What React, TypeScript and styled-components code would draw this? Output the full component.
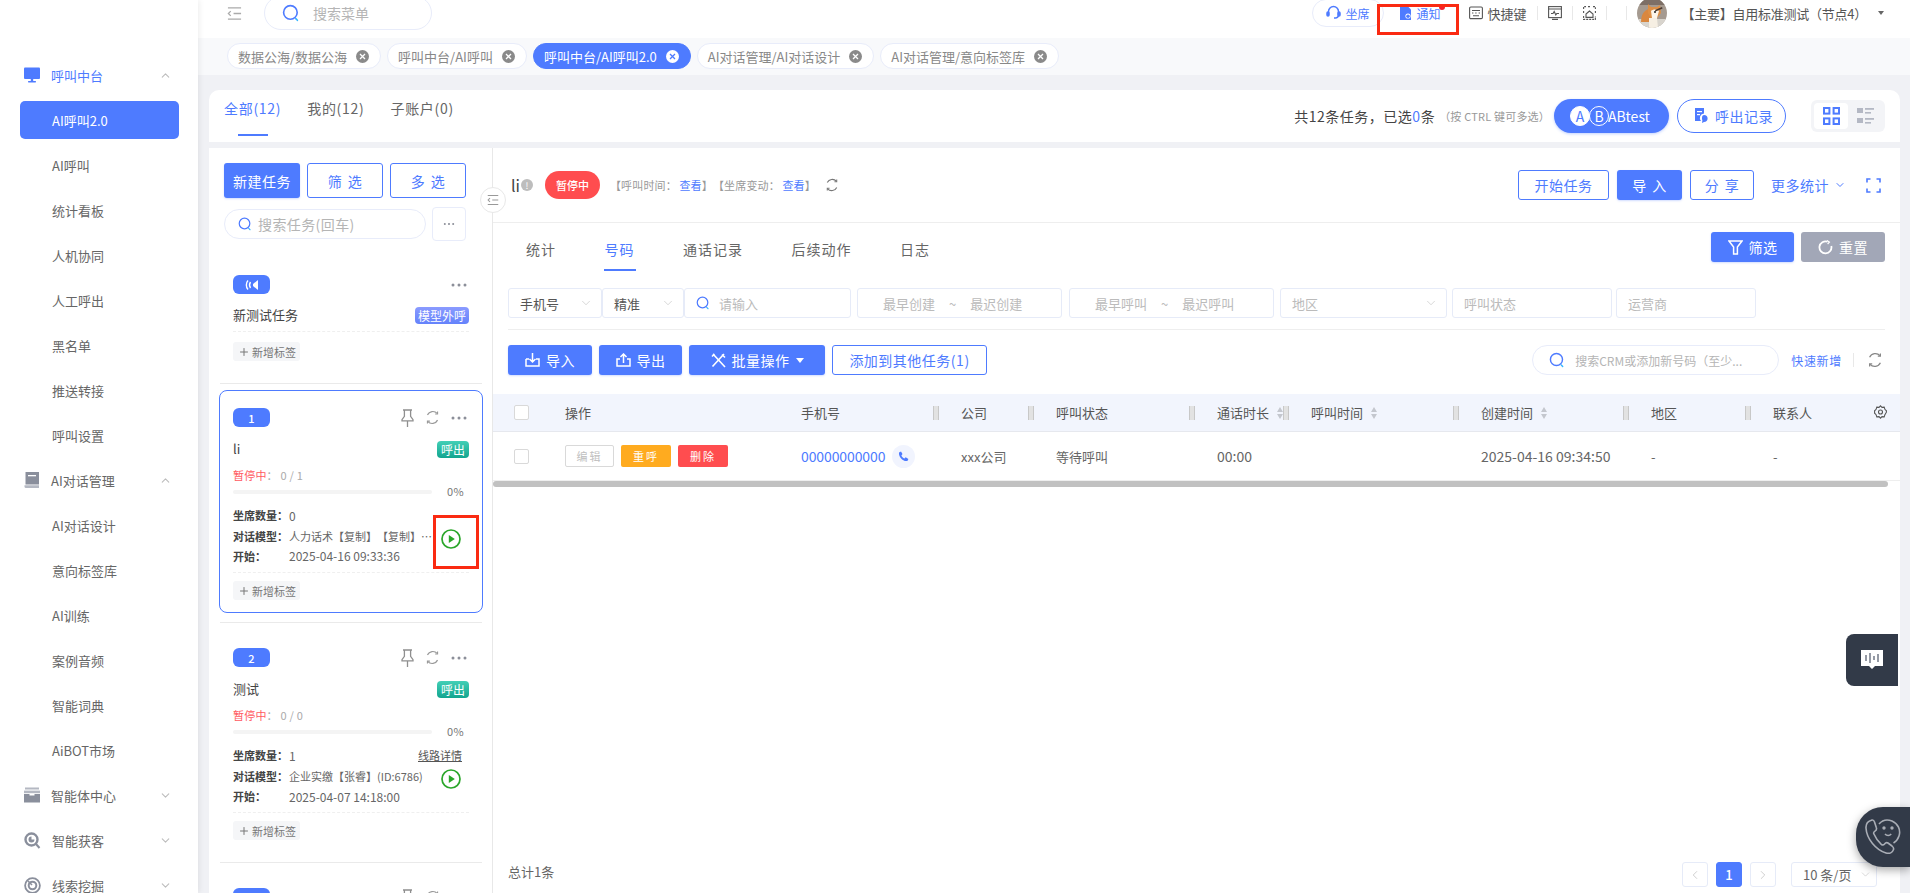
import React from 'react';
import styled, { createGlobalStyle, css } from 'styled-components';
import { ChevronDown, ChevronUp, ChevronLeft, ChevronRight, Plus } from 'lucide-react';

const PRIMARY = '#4e7bff';
const FONT = '"Noto Sans CJK SC", "Noto Sans", sans-serif';

const GlobalStyle = createGlobalStyle`
  html, body { margin: 0; padding: 0; height: 100%; overflow: hidden; background: #fff; }
  body { font-family: ${FONT}; color: #333; text-spacing-trim: space-all; }
  #root { height: 100%; }
  * { box-sizing: border-box; }
`;

/* ---------- icons ---------- */
const CollapseIcon: React.FC<{ size?: number; color?: string }> = ({ size = 15, color = '#aaa' }) => (
  <svg width={size} height={size} viewBox="0 0 16 16" fill="none" stroke={color} strokeWidth="1.4">
    <path d="M1 2h14M7 8h8M1 14h14" />
    <path d="M4 5.5 1.5 8 4 10.5" />
  </svg>
);

const SearchIcon: React.FC<{ size?: number }> = ({ size = 18 }) => (
  <svg width={size} height={size} viewBox="0 0 18 18" fill="none" strokeWidth="1.6">
    <circle cx="8.4" cy="8.4" r="6.8" stroke={PRIMARY} />
    <path d="M13.8 14.6l1.6 1.7" stroke="#35b6ff" strokeLinecap="round" />
  </svg>
);

const Monitor = () => (
  <svg width="16" height="16" viewBox="0 0 16 16" fill={PRIMARY}>
    <rect x="0" y="0.5" width="16" height="11.5" rx="1" />
    <rect x="6.8" y="12" width="2.4" height="2" />
    <rect x="4" y="14" width="8" height="1.4" rx=".6" />
  </svg>
);
const BookIcon = () => (
  <svg width="16" height="16" viewBox="0 0 16 16" fill="#8a8f9c">
    <path d="M1.5 0H15v12.5H1.5z" />
    <path d="M.5 13.2H15V16H2a1.5 1.5 0 0 1-1.5-1.5z" fill="#b4b8c2" />
    <rect x="4" y="3" width="8" height="1.3" fill="#fff" />
  </svg>
);
const BoxIcon = () => (
  <svg width="16" height="16" viewBox="0 0 16 16" fill="#8a8f9c">
    <rect x="1" y=".5" width="14" height="2" fill="#b4b8c2" />
    <rect x="0" y="3.6" width="16" height="2.6" fill="#b4b8c2" />
    <path d="M0 7h5.5v1.600h5V7H16v8.500H0z" />
  </svg>
);
const MagnetIcon = () => (
  <svg width="17" height="17" viewBox="0 0 17 17" fill="none">
    <circle cx="7.5" cy="7.5" r="6" stroke="#8a8f9c" strokeWidth="2.4" />
    <path d="M7.5 4.5a3 3 0 1 0 3 3h-3z" fill="#8a8f9c" />
    <path d="M12 12l3.5 4" stroke="#8a8f9c" strokeWidth="2" />
  </svg>
);
const TargetIcon = () => (
  <svg width="17" height="17" viewBox="0 0 17 17" fill="none" stroke="#8a8f9c">
    <circle cx="8.5" cy="8.5" r="7.4" strokeWidth="1.8" />
    <circle cx="8.5" cy="8.5" r="3.8" strokeWidth="2" />
    <path d="M8 8l-4-4" strokeWidth="1.6" />
  </svg>
);

const Headset = () => (
  <svg width="15" height="16" viewBox="0 0 15 16" fill="none" stroke={PRIMARY} strokeWidth="1.5">
    <path d="M2.5 8V6.500a5 5 0 0 1 10 0V10a3 3 0 0 1-3 3H8" />
    <rect x="1" y="7" width="2" height="4" rx="1" fill={PRIMARY} />
    <rect x="12" y="7" width="2" height="4" rx="1" fill={PRIMARY} />
  </svg>
);
const NoticeIcon = () => (
  <svg width="12" height="14" viewBox="0 0 12 14" fill={PRIMARY}>
    <path d="M0 0h7.5L11 3.5V14H0z" />
    <circle cx="8" cy="10" r="2.6" fill="#fff" />
    <circle cx="8" cy="10.2" r="1.8" />
  </svg>
);
const KeyIcon = () => (
  <svg width="14" height="14" viewBox="0 0 14 14" fill="none" stroke="#555" strokeWidth="1.1">
    <rect x=".6" y="1" width="12.8" height="11.6" rx="1.2" />
    <path d="M3 4.500h8M3 7h1.400M6.200 7h1.400M9.600 7H11M4 9.800h6" />
  </svg>
);
const PulseIcon = () => (
  <svg width="14" height="14" viewBox="0 0 14 14" fill="none" stroke="#555" strokeWidth="1.1">
    <rect x=".6" y=".6" width="12.8" height="11" />
    <path d="M.6 3h12.800M3 7.500h2l1.200-2 1.600 3.400 1-1.400H11M4 13.400h6" />
  </svg>
);
const ShotIcon = () => (
  <svg width="13" height="14" viewBox="0 0 13 14" fill="none" stroke="#555" strokeWidth="1.1">
    <path d="M.6 3V.6h2.400M5 .6h3M10 .6h2.400V3M.6 5v3M12.400 5v3M.6 10v3.400h11.800V10" strokeDasharray="2 1" />
    <path d="M6.500 5 3 8v3.400h7V8z" />
  </svg>
);
const Avatar = () => (
  <svg width="30" height="30" viewBox="0 0 30 30">
    <defs>
      <clipPath id="av"><circle cx="15" cy="15" r="15" /></clipPath>
    </defs>
    <g clipPath="url(#av)">
      <rect width="30" height="30" fill="#a59a90" />
      <rect y="0" width="30" height="7" fill="#7d6f66" />
      <rect y="21" width="30" height="9" fill="#d8d4cd" />
      <path d="M4 24c0-7 3-12 8-13l3 13z" fill="#d9873f" />
      <path d="M11 6l3 3h6l3-2 1 8-4 5h-6l-3-5z" fill="#dd8f45" />
      <path d="M14 13c2-2 6-2 8 0l-2 7h-5z" fill="#fbf5ea" />
      <path d="M12 20h8l1 10h-9z" fill="#f6efe3" />
      <path d="M18 12l7-3 .6 1.400-7 3z" fill="#4a3a30" />
      <circle cx="18" cy="14" r="1" fill="#222" />
    </g>
  </svg>
);
const RecordIcon = () => (
  <svg width="14" height="15" viewBox="0 0 14 15" fill={PRIMARY}>
    <path d="M1 0h9v5.400a4.600 4.600 0 0 0-3 7.600H1z" />
    <rect x="3" y="3" width="5" height="1.2" fill="#fff" />
    <rect x="3" y="6" width="3" height="1.2" fill="#fff" />
    <path d="M10 7c2.400 0 3.600 1.400 3.600 3.400S12.200 14 10 14l-2 1 .4-2.400C7.600 10 8 7 10 7z" />
  </svg>
);
const GridIcon = () => (
  <svg width="17" height="18" viewBox="0 0 17 18" fill="none" stroke={PRIMARY} strokeWidth="2">
    <rect x="1" y="1" width="5.4" height="5.6" />
    <rect x="10.6" y="1" width="5.4" height="5.6" />
    <rect x="1" y="11.4" width="5.4" height="5.6" />
    <rect x="10.6" y="11.4" width="5.4" height="5.6" />
  </svg>
);
const ListIcon = () => (
  <svg width="17" height="18" viewBox="0 0 17 18" fill="#b4b8c4">
    <rect x="0" y="1" width="6" height="5" />
    <rect x="8" y="1" width="9" height="1.8" />
    <rect x="8" y="5" width="6" height="1.6" />
    <rect x="0" y="11" width="6" height="5" />
    <rect x="8" y="11" width="9" height="1.8" />
    <rect x="8" y="15" width="6" height="1.6" />
  </svg>
);
const PinIcon = () => (
  <svg width="13" height="18" viewBox="0 0 13 18" fill="none" stroke="#8f8f8f" strokeWidth="1.3">
    <path d="M2 1h9M3.400 1v6.400L1 10.600v1.200h11v-1.200L9.600 7.400V1M6.500 11.800V18" />
  </svg>
);
const RefreshIcon: React.FC<{ size?: number; color?: string }> = ({ size = 15, color = '#999' }) => (
  <svg width={size} height={size} viewBox="0 0 16 16" fill="none" stroke={color} strokeWidth="1.3">
    <path d="M2.600 5.200A6.400 6.400 0 0 1 13 3.600" />
    <path d="M13.400 10.800A6.400 6.400 0 0 1 3 12.400" />
    <path d="M13.400 1.600v2.600h-2.600M2.600 14.400v-2.600h2.600" strokeWidth="1.2" />
  </svg>
);
const ResetIcon = () => (
  <svg width="15" height="15" viewBox="0 0 15 15" fill="none" stroke="#fff" strokeWidth="1.8">
    <path d="M9.500 1.700A6 6 0 1 0 13.300 6" />
    <path d="M9 .6l2.400 1.500L9.600 4" strokeWidth="1.2" />
  </svg>
);
const DotsIcon: React.FC = () => (
  <svg width="16" height="4" viewBox="0 0 16 4" fill="#8c8f99">
    <circle cx="2" cy="2" r="1.5" /><circle cx="8" cy="2" r="1.5" /><circle cx="14" cy="2" r="1.5" />
  </svg>
);
const SoundIcon = () => (
  <svg width="14" height="12" viewBox="0 0 14 12" fill="none" stroke="#fff" strokeWidth="1.4">
    <path d="M3 1.500c-2.200 2.400-2.200 6.600 0 9M5.500 3c-1.200 1.800-1.200 4.200 0 6" />
    <path d="M13 1 8 5v2l5 4z" fill="#fff" stroke="none" />
  </svg>
);
const PlayCircle = () => (
  <svg width="20" height="20" viewBox="0 0 20 20">
    <circle cx="10" cy="10" r="9" fill="none" stroke="#2aa62a" strokeWidth="1.7" />
    <path d="M7.800 6l6 4-6 4z" fill="#2aa62a" />
  </svg>
);
const FilterIcon = () => (
  <svg width="15" height="15" viewBox="0 0 15 15" fill="none" stroke="#fff" strokeWidth="1.5">
    <path d="M1 1h13L9.400 7v7H5.600V7z" />
  </svg>
);
const FullIcon = () => (
  <svg width="15" height="15" viewBox="0 0 15 15" fill="none" stroke={PRIMARY} strokeWidth="1.6">
    <path d="M1 4.500V1h3.500M10.500 1H14v3.500M14 10.500V14h-3.500M4.500 14H1v-3.500" />
  </svg>
);
const ImportIcon = () => (
  <svg width="15" height="14" viewBox="0 0 15 14" fill="none" stroke="#fff" strokeWidth="1.5">
    <path d="M1 6v7h13V6h-3M4 6H1M7.500 0v8.500M4.500 6l3 3 3-3" />
  </svg>
);
const ExportIcon = () => (
  <svg width="15" height="14" viewBox="0 0 15 14" fill="none" stroke="#fff" strokeWidth="1.5">
    <path d="M4 6H1v7h13V6h-3M7.500 10V1.500M4.500 4l3-3 3 3" />
  </svg>
);
const ToolsIcon = () => (
  <svg width="15" height="15" viewBox="0 0 15 15" fill="none" stroke="#fff" strokeWidth="1.6">
    <path d="M2 1l12 13M13 1 1.500 13.500M1 3.500 3.500 1M11 1.500l3 3" />
  </svg>
);
const PhoneIcon = () => (
  <svg width="11" height="11" viewBox="0 0 11 11" fill={PRIMARY}>
    <path d="M1 1.500 3 .5l1.500 2.600L3.400 4.400c.5 1.300 1.600 2.500 3 3l1.300-1.100L10.400 8l-1 2C5 10.800 .4 6 1 1.500z" />
  </svg>
);
const GearIcon = () => (
  <svg width="13" height="14" viewBox="0 0 13 14" fill="none" stroke="#555" strokeWidth="1.1">
    <path d="M6.500.8 8 2.400l2.200-.2.7 2.100 1.500 1.500v1.400L10.900 9.700l-.7 2.100L8 11.600 6.500 13.200 5 11.600l-2.200.2-.7-2.100L.6 8.200V5.800l1.500-1.500.7-2.100L5 2.400z" />
    <circle cx="6.500" cy="7" r="2" />
  </svg>
);
const ChatBubble = () => (
  <svg width="22" height="20" viewBox="0 0 22 20">
    <path d="M0 0h22v16h-8l-3 3-3-3H0z" fill="#fff" />
    <path d="M5 5v6M9 3v10M13 6v4M17 4v8" stroke="#5d6575" strokeWidth="1.3" />
  </svg>
);
const SmilePhone = () => (
  <svg width="36" height="38" viewBox="0 0 36 38" fill="none" stroke="#a9adb5" strokeWidth="1.6">
    <path d="M7 2C3 3 .8 6 1 10c.6 11 10 22 20 25 3.500 1 6.500-.5 7.500-3.500.5-1.500-.3-2.500-1.500-3.500l-4-3c-1.200-.8-2.500-.3-3.500 1-1 1.200-2 1.300-3.200.3-3-2.800-6-6.800-7.500-10.500-.5-1.300 0-2 1.200-2.700 1.500-.9 1.800-2.200 1.300-3.600L9.500 4C9 2.500 8 1.800 7 2z" />
    <path d="M14 6c3-3.500 8-5 13-3 6 2.500 9 9 7 15-1 3-3 5.500-5.500 7" />
    <circle cx="19" cy="10" r=".9" fill="#a9adb5" />
    <circle cx="27" cy="10" r=".9" fill="#a9adb5" />
    <path d="M20 16c1.800 2 4.500 2 6.200 0" />
  </svg>
);

/* ---------- shell ---------- */
const Shell = styled.div`
  position: relative;
  display: flex;
  width: 1910px;
  height: 893px;
  overflow: hidden;
  background: #f0f1f5;
`;

const Sidebar = styled.aside`
  display: flex;
  flex-direction: column;
  flex: 0 0 198px;
  height: 893px;
  overflow: hidden;
  padding-top: 52.5px;
  background: #fff;
  box-shadow: 1px 0 6px rgba(0, 0, 0, 0.08);
  z-index: 2;
`;

const GroupRow = styled.div<{ $active?: boolean }>`
  display: flex;
  flex-shrink: 0;
  align-items: center;
  gap: 11px;
  height: 45px;
  padding: 0 26px 0 24px;
  font-size: 13px;
  color: ${p => (p.$active ? PRIMARY : '#666')};
  svg:last-child { margin-left: auto; color: #bdbdbd; }
`;

const ChildItem = styled.div<{ $active?: boolean }>`
  display: flex;
  flex-shrink: 0;
  align-items: center;
  height: 38px;
  margin: 3.5px 19px 3.5px 20px;
  padding-left: 32px;
  border-radius: 5px;
  font-size: 13px;
  color: #666;
  ${p =>
    p.$active &&
    css`
      background: ${PRIMARY};
      color: #fff;
    `}
`;

const Main = styled.div`
  flex: 1;
  display: flex;
  flex-direction: column;
  min-width: 0;
`;

const Header = styled.header`
  display: flex;
  align-items: center;
  height: 38px;
  padding: 0 26px 12px 29px;
  background: #fff;
  font-size: 12px;
  color: #555;
`;

const MenuSearch = styled.div`
  display: flex;
  flex: 0 0 168px;
  align-items: center;
  gap: 13px;
  height: 34px;
  margin-left: 22px;
  padding-left: 17px;
  border: 1px solid #e8ecfa;
  border-radius: 17px;
  font-size: 14px;
  color: #b5b5b5;
`;

const HeaderRight = styled.div`
  display: flex;
  align-items: center;
  margin-left: auto;
`;

const SeatPill = styled.div`
  display: flex;
  align-items: center;
  gap: 5px;
  width: 72px;
  height: 28px;
  padding-left: 13px;
  border: 1px solid #e8ecfa;
  border-radius: 14px;
  color: ${PRIMARY};
`;

const NoticeItem = styled.div`
  position: relative;
  display: flex;
  align-items: center;
  gap: 5px;
  height: 18px;
  margin: 0 28px 0 16px;
  color: ${PRIMARY};
`;

const RedDot = styled.i`
  position: absolute;
  left: 39px;
  top: 0;
  width: 6px;
  height: 6px;
  border-radius: 50%;
  background: #f5222d;
`;

const RedFrame = styled.div`
  position: absolute;
  border: 3px solid #fa2a12;
  pointer-events: none;
`;

const NoticeFrame = styled(RedFrame)`
  left: -23px;
  top: 0;
  width: 82px;
  height: 31px;
`;

const ShortcutItem = styled.div`
  display: flex;
  align-items: center;
  gap: 5px;
  font-size: 13px;
`;

const HeaderSep = styled.i<{ $wide?: boolean }>`
  width: 1px;
  height: 14px;
  margin: 0 10px 0 ${p => (p.$wide ? 9 : 10)}px;
  background: #e8e8e8;
`;

const AccountName = styled.span`
  margin: 0 11px 0 15px;
  color: #555;
  white-space: nowrap;
  font-size: 13px;
  letter-spacing: -0.25px;
`;

const Caret = styled.i<{ $light?: boolean }>`
  width: 0;
  height: 0;
  border-left: ${p => (p.$light ? 4.5 : 3.5)}px solid transparent;
  border-right: ${p => (p.$light ? 4.5 : 3.5)}px solid transparent;
  border-top: ${p => (p.$light ? 5 : 4)}px solid ${p => (p.$light ? '#fff' : '#666')};
`;

const TabBar = styled.nav`
  display: flex;
  gap: 6px;
  height: 37px;
  padding: 5px 0 0 29px;
  background: #f8f9fb;
`;

const PageTab = styled.div<{ $active?: boolean }>`
  display: flex;
  align-items: center;
  gap: 9px;
  height: 26px;
  padding: 0 11px 0 10px;
  border: 1px solid #e8ecfa;
  border-radius: 13px;
  font-size: 13px;
  white-space: nowrap;
  color: #888;
  background: #fff;
  ${p =>
    p.$active &&
    css`
      background: ${PRIMARY};
      border-color: ${PRIMARY};
      color: #fff;
    `}
`;

const TabClose = styled.i<{ $active?: boolean }>`
  display: flex;
  align-items: center;
  justify-content: center;
  width: 13px;
  height: 13px;
  border-radius: 50%;
  font-style: normal;
  background: ${p => (p.$active ? '#fff' : '#8a8a8a')};
  svg { display: block; }
`;

const Content = styled.div`
  flex: 1;
  display: flex;
  flex-direction: column;
  gap: 6px;
  min-height: 0;
  padding: 15px 10px 0 11px;
`;

const TopPanel = styled.section`
  display: flex;
  align-items: flex-start;
  height: 52px;
  padding: 0 15px;
  background: #fff;
  border-radius: 10px 10px 0 0;
`;

const ScopeTab = styled.div<{ $active?: boolean }>`
  position: relative;
  height: 46px;
  margin-right: 26px;
  font-size: 14px;
  line-height: 37px;
  letter-spacing: 0.7px;
  color: ${p => (p.$active ? PRIMARY : '#666')};
  ${p =>
    p.$active &&
    css`
      &::after {
        content: '';
        position: absolute;
        left: 14px;
        bottom: 0;
        width: 30px;
        height: 2px;
        background: ${PRIMARY};
      }
    `}
`;

const TopRight = styled.div`
  display: flex;
  align-items: center;
  height: 46px;
  margin-left: auto;
  padding-top: 5px;
`;

const Counter = styled.span`
  font-size: 14px;
  letter-spacing: 0.5px;
  color: #444;
  em { font-style: normal; color: ${PRIMARY}; }
`;

const Hint = styled.span`
  margin: 0 4px 0 4px;
  font-size: 11px;
  letter-spacing: 0.2px;
  color: #999;
  white-space: nowrap;
`;

const AbButton = styled.div`
  display: flex;
  align-items: center;
  width: 115px;
  height: 34px;
  padding-left: 16px;
  border-radius: 17px;
  background: ${PRIMARY};
  color: #fff;
  font-size: 14px;
  box-shadow: 0 1px 3px rgba(78, 123, 255, 0.35);
`;

const AbCircle = styled.i<{ $filled?: boolean }>`
  display: flex;
  align-items: center;
  justify-content: center;
  width: 20px;
  height: 20px;
  margin-right: -1px;
  border-radius: 50%;
  font-style: normal;
  font-size: 14px;
  border: 1px solid #fff;
  background: ${p => (p.$filled ? '#fff' : 'transparent')};
  color: ${p => (p.$filled ? PRIMARY : '#fff')};
`;

const RecordButton = styled.div`
  display: flex;
  align-items: center;
  gap: 7px;
  width: 109px;
  height: 34px;
  margin-left: 8px;
  padding-left: 16px;
  border: 1px solid ${PRIMARY};
  border-radius: 17px;
  color: ${PRIMARY};
  font-size: 14px;
  letter-spacing: 0.5px;
`;

const ViewToggle = styled.div`
  display: flex;
  align-items: center;
  width: 74px;
  height: 32px;
  margin-left: 25px;
  padding: 0 3px;
  border-radius: 6px;
  background: #f3f4f7;
`;

const ViewOption = styled.div<{ $active?: boolean }>`
  display: flex;
  align-items: center;
  justify-content: center;
  width: 34px;
  height: 26px;
  border-radius: 4px;
  background: ${p => (p.$active ? '#fff' : 'transparent')};
`;

const Body = styled.section`
  position: relative;
  flex: 1;
  display: flex;
  min-height: 0;
  background: #fff;
`;

const CollapseToggle = styled.div`
  position: absolute;
  left: 271px;
  top: 39px;
  display: flex;
  align-items: center;
  justify-content: center;
  width: 26px;
  height: 26px;
  border: 1px solid #e8e8e8;
  border-radius: 50%;
  background: #fff;
  z-index: 1;
`;

/* ---------- task column ---------- */
const TaskColumn = styled.div`
  flex: 0 0 284px;
  height: 745px;
  overflow: hidden;
  padding-top: 15px;
  border-right: 1px solid #e8e8e8;
`;

const TaskActions = styled.div`
  display: flex;
  gap: 7px;
  padding-left: 15px;
`;

const Btn = styled.div<{ $variant?: 'primary' | 'outline' | 'gray' }>`
  display: inline-flex;
  align-items: center;
  justify-content: center;
  gap: 6px;
  height: 30px;
  border-radius: 3px;
  font-size: 14px;
  letter-spacing: 0.5px;
  word-spacing: 2px;
  white-space: nowrap;
  border: 1px solid transparent;
  ${p => {
    switch (p.$variant) {
      case 'outline':
        return css`
          border-color: ${PRIMARY};
          color: ${PRIMARY};
          background: #fff;
        `;
      case 'gray':
        return css`
          background: #a2a7b7;
          color: #fff;
        `;
      default:
        return css`
          background: ${PRIMARY};
          color: #fff;
          box-shadow: 0 1px 2px rgba(78, 123, 255, 0.25);
        `;
    }
  }}
`;

const TaskBtn = styled(Btn)`
  width: 76px;
  height: 35px;
`;

const TaskSearchRow = styled.div`
  display: flex;
  align-items: center;
  gap: 6px;
  margin-top: 9px;
  padding-left: 15px;
`;

const TaskSearch = styled.div`
  display: flex;
  align-items: center;
  gap: 6px;
  width: 202px;
  height: 30px;
  padding-left: 13px;
  border: 1px solid #e8ecfa;
  border-radius: 15px;
  font-size: 14px;
  letter-spacing: 0.4px;
  color: #b5b5b5;
`;

const MoreBox = styled.div`
  display: flex;
  align-items: center;
  justify-content: center;
  width: 34px;
  height: 34px;
  border: 1px solid #e8ecfa;
  border-radius: 4px;
  svg { transform: scale(0.7); }
`;

const TaskList = styled.div`
  margin-top: 16px;
  padding-left: 10px;
  width: 274px;
`;

const TaskCard = styled.article<{ $active?: boolean }>`
  position: relative;
  padding: 17px 13px 12px;
  border: 1px solid ${p => (p.$active ? PRIMARY : 'transparent')};
  border-radius: 8px;
  ${p => p.$active && 'margin-top: -1px;'}
`;

const CardDivider = styled.hr`
  height: 1px;
  margin: 9px 1px 7px;
  border: 0;
  background: #eaeaea;
`;

const CardHead = styled.div`
  display: flex;
  align-items: center;
  height: 19px;
`;

const OrderBadge = styled.span`
  display: flex;
  align-items: center;
  justify-content: center;
  width: 37px;
  height: 19px;
  margin-right: auto;
  border-radius: 6px;
  background: ${PRIMARY};
  color: #fff;
  font-size: 11px;
  font-weight: 500;
`;

const CardIcons = styled.div`
  display: flex;
  align-items: center;
  gap: 11px;
  padding-right: 2px;
`;

const TitleRow = styled.div<{ $compact?: boolean }>`
  display: flex;
  align-items: center;
  justify-content: space-between;
  height: 17px;
  margin-top: ${p => (p.$compact ? 13 : 14)}px;
  font-size: 13px;
  color: #444;
  span { margin-top: -2px; }
`;

const KindTag = styled.b<{ $kind: 'model' | 'out' }>`
  display: flex;
  align-items: center;
  justify-content: center;
  height: 17px;
  border-radius: 4px;
  font-size: 12px;
  font-weight: 400;
  color: #fff;
  ${p =>
    p.$kind === 'model'
      ? css`
          width: 54px;
          background: linear-gradient(180deg, #8a9bff, #6482fb);
        `
      : css`
          width: 32px;
          background: linear-gradient(180deg, #42cfb6, #13a58f);
        `}
`;

const StatusLine = styled.div`
  height: 16px;
  margin-top: 9px;
  font-size: 11px;
  line-height: 16px;
  letter-spacing: 0.2px;
  color: #aaa;
  em { font-style: normal; color: #ff5a5f; }
`;

const ProgressRow = styled.div`
  display: flex;
  align-items: center;
  height: 16px;
  font-size: 11px;
  letter-spacing: 0.3px;
  color: #777;
`;

const ProgressTrack = styled.div`
  width: 199px;
  height: 4px;
  margin-top: 1px;
  margin-right: 15px;
  border-radius: 2px;
  background: #f4f4f4;
`;

const InfoList = styled.div`
  margin-top: 6px;
`;

const InfoRow = styled.div`
  display: flex;
  align-items: center;
  height: 20.4px;
  font-size: 11px;
  color: #666;
  b {
    flex: 0 0 56px;
    font-weight: 700;
    color: #444;
  }
`;

const InfoValue = styled.span<{ $clip?: boolean; $num?: boolean }>`
  white-space: nowrap;
  ${p => p.$num && 'font-size: 12px;'}
  ${p =>
    p.$clip &&
    css`
      width: 143px;
      overflow: hidden;
      text-overflow: ellipsis;
    `}
`;

const RouteLink = styled.a`
  margin-left: auto;
  margin-right: 7px;
  color: #555;
  text-decoration: underline;
`;

const PlayWrap = styled.span`
  display: flex;
  margin: -7px 0 -13px 9px;
`;

const PlayFrame = styled(RedFrame)`
  left: 213px;
  top: 124px;
  width: 46px;
  height: 54px;
`;

const DashLine = styled.div<{ $compact?: boolean }>`
  margin-top: ${p => (p.$compact ? 7 : 6)}px;
  border-top: 1px dashed #efefef;
`;

const AddTag = styled.div<{ $compact?: boolean }>`
  display: inline-flex;
  align-items: center;
  gap: 2px;
  height: 19px;
  margin-top: ${p => (p.$compact ? 10 : 8)}px;
  padding: 0 4px 0 5px;
  border-radius: 3px;
  background: #f5f6f8;
  font-size: 11px;
  color: #777;
  vertical-align: top;
`;

/* ---------- detail pane ---------- */
const Detail = styled.div`
  flex: 1;
  display: flex;
  flex-direction: column;
  min-width: 0;
`;

const DetailHead = styled.div`
  display: flex;
  align-items: center;
  height: 75px;
  padding: 0 19px 0 18px;
  border-bottom: 1px solid #eee;
`;

const DetailName = styled.span`
  font-size: 16px;
  color: #444;
`;

const InfoDot = styled.i`
  display: flex;
  align-items: center;
  justify-content: center;
  width: 12px;
  height: 12px;
  margin: 0 12px 0 1px;
  border-radius: 50%;
  background: #bdbdbd;
  color: #fff;
  font-style: normal;
  font-size: 9px;
`;

const StatePill = styled.span`
  display: flex;
  align-items: center;
  justify-content: center;
  width: 55px;
  height: 28px;
  border-radius: 14px;
  background: #ff4d4f;
  color: #fff;
  font-size: 11px;
  font-weight: 500;
`;

const DetailMeta = styled.span`
  margin: 0 9px 0 10px;
  font-size: 11px;
  letter-spacing: 0.15px;
  color: #999;
  white-space: nowrap;
  a { color: ${PRIMARY}; }
`;

const HeadActions = styled.div`
  display: flex;
  align-items: center;
  margin-left: auto;
  gap: 8px;
`;

const MoreStats = styled.span`
  display: flex;
  align-items: center;
  gap: 5px;
  margin: 0 12px 0 9px;
  font-size: 14px;
  letter-spacing: 0.5px;
  color: ${PRIMARY};
`;

const WideBtn = styled(Btn)<{ $w: number }>`
  width: ${p => p.$w}px;
`;

const TabsRow = styled.div`
  display: flex;
  align-items: center;
  height: 48px;
  padding: 0 15px 0 33px;
  gap: 48.5px;
`;

const DetailTab = styled.div<{ $active?: boolean }>`
  position: relative;
  display: flex;
  align-items: center;
  height: 48px;
  padding-top: 4px;
  font-size: 14px;
  letter-spacing: 1px;
  color: ${p => (p.$active ? PRIMARY : '#666')};
  ${p =>
    p.$active &&
    css`
      &::after {
        content: '';
        position: absolute;
        left: -1px;
        right: -1px;
        bottom: 0;
        height: 2px;
        background: ${PRIMARY};
      }
    `}
`;

const TabsActions = styled.div`
  display: flex;
  gap: 7px;
  margin-left: auto;
`;

const FilterBar = styled.div`
  display: flex;
  margin: 17px 15px 0;
  padding-bottom: 11px;
  border-bottom: 1px solid #eee;
`;

const Field = styled.div<{ $w: number; $gap?: number }>`
  display: flex;
  align-items: center;
  justify-content: space-between;
  flex: 0 0 ${p => p.$w}px;
  height: 30px;
  margin-right: ${p => p.$gap ?? 0}px;
  padding: 0 8px 0 11px;
  border: 1px solid #e6ebf8;
  border-radius: 3px;
  font-size: 13px;
  color: #bbb;
  svg { color: #bbb; }
`;

const SelectText = styled.span<{ $muted?: boolean }>`
  color: ${p => (p.$muted ? '#bbb' : '#555')};
`;

const SearchField = styled(Field)`
  justify-content: flex-start;
  gap: 9px;
`;

const DateField = styled(Field)`
  justify-content: flex-start;
  gap: 14px;
  padding-left: 25px;
`;

const ActionBar = styled.div`
  display: flex;
  align-items: center;
  gap: 7px;
  margin: 15px 0 0;
  padding: 0 17px 0 15px;
`;

const CrmSearch = styled.div`
  display: flex;
  align-items: center;
  gap: 10px;
  width: 247px;
  height: 30px;
  margin-left: auto;
  margin-right: 5px;
  padding-left: 16px;
  border: 1px solid #e8ecfa;
  border-radius: 15px;
  font-size: 12px;
  color: #b5b5b5;
  white-space: nowrap;
`;

const QuickAdd = styled.span`
  margin-right: 4px;
  font-size: 12px;
  letter-spacing: 0.7px;
  color: ${PRIMARY};
  white-space: nowrap;
`;

const ActionSep = styled.i`
  width: 1px;
  height: 14px;
  margin-right: 6px;
  background: #e8e8e8;
`;

const TableGrid = css`
  display: grid;
  grid-template-columns: 72px 236px 160px 95px 161px 94px 170px 170px 122px 127px;
  align-items: center;
  font-size: 13px;
`;

const TableHead = styled.div`
  ${TableGrid};
  height: 38px;
  margin-top: 19px;
  background: #f2f5fd;
  border-bottom: 1px solid #e6e8ee;
  color: #555;
`;

const TableRow = styled.div`
  ${TableGrid};
  height: 49px;
  color: #666;
  border-bottom: 1px solid #eee;
`;

const HeadCell = styled.div<{ $sep?: boolean }>`
  position: relative;
  display: flex;
  align-items: center;
  gap: 8px;
  height: 100%;
  white-space: nowrap;
  ${p =>
    p.$sep &&
    css`
      &::after {
        content: '';
        position: absolute;
        right: 22px;
        top: 12px;
        width: 4px;
        height: 14px;
        border-left: 1px solid #c8c8c8;
        border-right: 1px solid #c8c8c8;
        background: #e2e2e2;
      }
    `}
`;

const CheckBox = styled.i`
  display: block;
  width: 15px;
  height: 15px;
  margin-left: 21px;
  border: 1px solid #d9d9d9;
  border-radius: 2px;
  background: #fff;
`;

const SortArrows = styled.i`
  display: flex;
  flex-direction: column;
  gap: 2px;
  &::before, &::after {
    content: '';
    width: 0;
    height: 0;
    border-left: 3.5px solid transparent;
    border-right: 3.5px solid transparent;
  }
  &::before { border-bottom: 5px solid #c4c7ce; }
  &::after { border-top: 5px solid #c4c7ce; }
`;

const GearCell = styled.span`
  position: absolute;
  right: 13px;
  top: 11px;
  display: flex;
`;

const RowActions = styled.div`
  display: flex;
  gap: 7px;
`;

const RowBtn = styled.span<{ $kind: 'edit' | 'warn' | 'danger' }>`
  display: flex;
  align-items: center;
  justify-content: center;
  width: ${p => (p.$kind === 'edit' ? 49 : 50)}px;
  height: 22px;
  border-radius: 2px;
  font-size: 11px;
  letter-spacing: 2px;
  ${p =>
    p.$kind === 'edit'
      ? css`
          border: 1px solid #d9d9d9;
          color: #c0c0c0;
          background: #fff;
        `
      : p.$kind === 'warn'
      ? css`
          background: #ffab1f;
          color: #fff;
        `
      : css`
          background: #ff4d4f;
          color: #fff;
        `}
`;

const PhoneCell = styled.div`
  display: flex;
  align-items: center;
  gap: 7px;
  font-size: 14px;
  letter-spacing: -0.1px;
  color: ${PRIMARY};
`;

const NumCell = styled.span`
  font-size: 14px;
`;

const CallCircle = styled.span`
  display: flex;
  align-items: center;
  justify-content: center;
  width: 23px;
  height: 23px;
  border-radius: 50%;
  background: #f1f4fe;
`;

const HScroll = styled.div`
  width: 1395px;
  height: 6px;
  border-radius: 3px;
  background: #c1c1c1;
`;

const Footer = styled.div`
  display: flex;
  align-items: center;
  height: 25px;
  margin-top: auto;
  margin-bottom: 6px;
  padding: 0 23px 0 15px;
  font-size: 12px;
  color: #666;
`;

const TotalText = styled.span`
  margin-bottom: 6px;
  font-size: 13px;
`;

const PageBox = styled.div<{ $active?: boolean }>`
  display: flex;
  align-items: center;
  justify-content: center;
  width: 26px;
  height: 25px;
  margin-right: 8px;
  border: 1px solid ${p => (p.$active ? PRIMARY : '#e6ebf8')};
  border-radius: 3px;
  background: ${p => (p.$active ? PRIMARY : '#fff')};
  color: ${p => (p.$active ? '#fff' : '#bbb')};
  font-size: 13px;
  font-weight: 500;
`;

const PageSize = styled.div`
  display: flex;
  align-items: center;
  justify-content: space-between;
  width: 86px;
  height: 25px;
  margin-left: 7px;
  padding: 0 4px 0 11px;
  border: 1px solid #e6ebf8;
  border-radius: 3px;
  font-size: 13px;
  color: #666;
  svg { color: #bbb; }
`;

const Pager = styled.div`
  display: flex;
  align-items: center;
  margin-left: auto;
`;

const FloatChat = styled.div`
  position: absolute;
  left: 1846px;
  top: 634px;
  display: flex;
  align-items: center;
  justify-content: center;
  width: 52px;
  height: 52px;
  border-radius: 8px 0 0 8px;
  background: #323a48;
  z-index: 3;
`;

const FloatPhone = styled.div`
  position: absolute;
  left: 1856px;
  top: 807px;
  display: flex;
  align-items: center;
  justify-content: center;
  width: 54px;
  height: 60px;
  border-radius: 27px 0 0 27px;
  background: #323a48;
  box-shadow: 0 3px 10px rgba(0, 0, 0, 0.35);
  z-index: 3;
`;

/* ---------- data ---------- */
const navGroups: { icon: React.ReactNode; label: string; open?: boolean; active?: boolean; items?: string[] }[] = [
  { icon: <Monitor />, label: '呼叫中台', open: true, active: true, items: ['AI呼叫2.0', 'AI呼叫', '统计看板', '人机协同', '人工呼出', '黑名单', '推送转接', '呼叫设置'] },
  { icon: <BookIcon />, label: 'AI对话管理', open: true, items: ['AI对话设计', '意向标签库', 'AI训练', '案例音频', '智能词典', 'AiBOT市场'] },
  { icon: <BoxIcon />, label: '智能体中心' },
  { icon: <MagnetIcon />, label: '智能获客' },
  { icon: <TargetIcon />, label: '线索挖掘' },
];

const pageTabs = ['数据公海/数据公海', '呼叫中台/AI呼叫', '呼叫中台/AI呼叫2.0', 'AI对话管理/AI对话设计', 'AI对话管理/意向标签库'];

const columns = [
  { label: '操作' },
  { label: '手机号', sep: true },
  { label: '公司', sep: true },
  { label: '呼叫状态', sep: true },
  { label: '通话时长', sort: true, sep: true },
  { label: '呼叫时间', sort: true, sep: true },
  { label: '创建时间', sort: true, sep: true },
  { label: '地区', sep: true },
  { label: '联系人' },
];

interface Task {
  order: number;
  title: string;
  total: string;
  seats: string;
  model: string;
  start: string;
  active?: boolean;
  route?: boolean;
}

const tasks: Task[] = [
  { order: 1, title: 'li', total: '0 / 1', seats: '0', model: '人力话术【复制】【复制】【复制】', start: '2025-04-16 09:33:36', active: true },
  { order: 2, title: '测试', total: '0 / 0', seats: '1', model: '企业实缴【张睿】(ID:6786)', start: '2025-04-07 14:18:00', route: true },
];

const CloseGlyph: React.FC<{ active?: boolean }> = ({ active }) => (
  <svg width="7" height="7" viewBox="0 0 7 7" stroke={active ? PRIMARY : '#fff'} strokeWidth="1.3">
    <path d="M1 1l5 5M6 1 1 6" />
  </svg>
);

const TaskItem: React.FC<{ task: Task }> = ({ task }) => (
  <TaskCard $active={task.active}>
    <CardHead>
      <OrderBadge>{task.order}</OrderBadge>
      <CardIcons>
        <PinIcon />
        <RefreshIcon />
        <DotsIcon />
      </CardIcons>
    </CardHead>
    <TitleRow>
      <span>{task.title}</span>
      <KindTag $kind="out">呼出</KindTag>
    </TitleRow>
    <StatusLine>
      <em>暂停中</em>： {task.total}
    </StatusLine>
    <ProgressRow>
      <ProgressTrack />
      0%
    </ProgressRow>
    <InfoList>
      <InfoRow>
        <b>坐席数量：</b>
        <InfoValue $num>{task.seats}</InfoValue>
        {task.route && <RouteLink>线路详情</RouteLink>}
      </InfoRow>
      <InfoRow>
        <b>对话模型：</b>
        <InfoValue $clip>{task.model}</InfoValue>
        <PlayWrap>
          <PlayCircle />
        </PlayWrap>
      </InfoRow>
      <InfoRow>
        <b>开始：</b>
        <InfoValue $num>{task.start}</InfoValue>
      </InfoRow>
    </InfoList>
    <DashLine />
    <AddTag>
      <Plus size={12} />
      新增标签
    </AddTag>
    {task.active && <PlayFrame />}
  </TaskCard>
);

const App: React.FC = () => (
  <Shell>
    <GlobalStyle />
    <Sidebar>
      {navGroups.map(group => (
        <React.Fragment key={group.label}>
          <GroupRow $active={group.active}>
            {group.icon}
            <span>{group.label}</span>
            {group.open ? <ChevronUp size={13} /> : <ChevronDown size={13} />}
          </GroupRow>
          {group.items?.map((item, i) => (
            <ChildItem key={item} $active={group.active && i === 0}>
              {item}
            </ChildItem>
          ))}
        </React.Fragment>
      ))}
    </Sidebar>

    <Main>
      <Header>
        <CollapseIcon />
        <MenuSearch>
          <SearchIcon />
          搜索菜单
        </MenuSearch>
        <HeaderRight>
          <SeatPill>
            <Headset />
            坐席
          </SeatPill>
          <NoticeItem>
            <NoticeIcon />
            通知
            <RedDot />
            <NoticeFrame />
          </NoticeItem>
          <ShortcutItem>
            <KeyIcon />
            快捷键
          </ShortcutItem>
          <HeaderSep />
          <PulseIcon />
          <HeaderSep />
          <ShotIcon />
          <HeaderSep />
          <HeaderSep $wide />
          <Avatar />
          <AccountName>【主要】自用标准测试（节点4）</AccountName>
          <Caret />
        </HeaderRight>
      </Header>

      <TabBar>
        {pageTabs.map((tab, i) => (
          <PageTab key={tab} $active={i === 2}>
            {tab}
            <TabClose $active={i === 2}>
              <CloseGlyph active={i === 2} />
            </TabClose>
          </PageTab>
        ))}
      </TabBar>

      <Content>
        <TopPanel>
          <ScopeTab $active>全部(12)</ScopeTab>
          <ScopeTab>我的(12)</ScopeTab>
          <ScopeTab>子账户(0)</ScopeTab>
          <TopRight>
            <Counter>
              共12条任务，已选<em>0</em>条
            </Counter>
            <Hint>（按 CTRL 键可多选）</Hint>
            <AbButton>
              <AbCircle $filled>A</AbCircle>
              <AbCircle>B</AbCircle>
              <span>ABtest</span>
            </AbButton>
            <RecordButton>
              <RecordIcon />
              呼出记录
            </RecordButton>
            <ViewToggle>
              <ViewOption $active>
                <GridIcon />
              </ViewOption>
              <ViewOption>
                <ListIcon />
              </ViewOption>
            </ViewToggle>
          </TopRight>
        </TopPanel>

        <Body>
          <TaskColumn>
            <TaskActions>
              <TaskBtn>新建任务</TaskBtn>
              <TaskBtn $variant="outline">筛 选</TaskBtn>
              <TaskBtn $variant="outline">多 选</TaskBtn>
            </TaskActions>
            <TaskSearchRow>
              <TaskSearch>
                <SearchIcon size={14} />
                搜索任务(回车)
              </TaskSearch>
              <MoreBox>
                <DotsIcon />
              </MoreBox>
            </TaskSearchRow>
            <TaskList>
              <TaskCard>
                <CardHead>
                  <OrderBadge>
                    <SoundIcon />
                  </OrderBadge>
                  <CardIcons>
                    <DotsIcon />
                  </CardIcons>
                </CardHead>
                <TitleRow $compact>
                  <span>新测试任务</span>
                  <KindTag $kind="model">模型外呼</KindTag>
                </TitleRow>
                <DashLine $compact />
                <AddTag $compact>
                  <Plus size={12} />
                  新增标签
                </AddTag>
              </TaskCard>
              {tasks.map(task => (
                <React.Fragment key={task.order}>
                  <CardDivider />
                  <TaskItem task={task} />
                </React.Fragment>
              ))}
              <CardDivider />
              <TaskCard>
                <CardHead>
                  <OrderBadge>3</OrderBadge>
                  <CardIcons>
                    <PinIcon />
                    <RefreshIcon />
                    <DotsIcon />
                  </CardIcons>
                </CardHead>
              </TaskCard>
            </TaskList>
          </TaskColumn>

          <CollapseToggle>
            <CollapseIcon size={12} color="#999" />
          </CollapseToggle>

          <Detail>
            <DetailHead>
              <DetailName>li</DetailName>
              <InfoDot>!</InfoDot>
              <StatePill>暂停中</StatePill>
              <DetailMeta>
                【呼叫时间： <a>查看</a>】【坐席变动： <a>查看</a>】
              </DetailMeta>
              <RefreshIcon size={14} color="#777" />
              <HeadActions>
                <WideBtn $w={91} $variant="outline">开始任务</WideBtn>
                <WideBtn $w={65}>导 入</WideBtn>
                <WideBtn $w={64} $variant="outline">分 享</WideBtn>
                <MoreStats>
                  更多统计
                  <ChevronDown size={12} />
                </MoreStats>
                <FullIcon />
              </HeadActions>
            </DetailHead>

            <TabsRow>
              <DetailTab>统计</DetailTab>
              <DetailTab $active>号码</DetailTab>
              <DetailTab>通话记录</DetailTab>
              <DetailTab>后续动作</DetailTab>
              <DetailTab>日志</DetailTab>
              <TabsActions>
                <WideBtn $w={83}>
                  <FilterIcon />
                  筛选
                </WideBtn>
                <WideBtn $w={84} $variant="gray">
                  <ResetIcon />
                  重置
                </WideBtn>
              </TabsActions>
            </TabsRow>

            <FilterBar>
              <Field $w={94}>
                <SelectText>手机号</SelectText>
                <ChevronDown size={14} strokeWidth={1} />
              </Field>
              <Field $w={82}>
                <SelectText>精准</SelectText>
                <ChevronDown size={14} strokeWidth={1} />
              </Field>
              <SearchField $w={167} $gap={6}>
                <SearchIcon size={14} />
                请输入
              </SearchField>
              <DateField $w={205} $gap={7}>
                <span>最早创建</span>~<span>最迟创建</span>
              </DateField>
              <DateField $w={205} $gap={6}>
                <span>最早呼叫</span>~<span>最迟呼叫</span>
              </DateField>
              <Field $w={167} $gap={5}>
                <SelectText $muted>地区</SelectText>
                <ChevronDown size={14} strokeWidth={1} />
              </Field>
              <Field $w={160} $gap={4}>呼叫状态</Field>
              <Field $w={140}>运营商</Field>
            </FilterBar>

            <ActionBar>
              <WideBtn $w={84}>
                <ImportIcon />
                导入
              </WideBtn>
              <WideBtn $w={83}>
                <ExportIcon />
                导出
              </WideBtn>
              <WideBtn $w={136}>
                <ToolsIcon />
                批量操作
                <Caret $light />
              </WideBtn>
              <WideBtn $w={155} $variant="outline">添加到其他任务(1)</WideBtn>
              <CrmSearch>
                <SearchIcon size={16} />
                搜索CRM或添加新号码（至少...
              </CrmSearch>
              <QuickAdd>快速新增</QuickAdd>
              <ActionSep />
              <RefreshIcon size={16} color="#888" />
            </ActionBar>

            <TableHead>
              <HeadCell>
                <CheckBox />
              </HeadCell>
              {columns.map(col => (
                <HeadCell key={col.label} $sep={col.sep}>
                  {col.label}
                  {col.sort && <SortArrows />}
                  {col.label === '联系人' && (
                    <GearCell>
                      <GearIcon />
                    </GearCell>
                  )}
                </HeadCell>
              ))}
            </TableHead>

            <TableRow>
              <CheckBox />
              <RowActions>
                <RowBtn $kind="edit">编辑</RowBtn>
                <RowBtn $kind="warn">重呼</RowBtn>
                <RowBtn $kind="danger">删除</RowBtn>
              </RowActions>
              <PhoneCell>
                00000000000
                <CallCircle>
                  <PhoneIcon />
                </CallCircle>
              </PhoneCell>
              <span>xxx公司</span>
              <span>等待呼叫</span>
              <NumCell>00:00</NumCell>
              <span />
              <NumCell>2025-04-16 09:34:50</NumCell>
              <span>-</span>
              <span>-</span>
            </TableRow>
            <HScroll />

            <Footer>
              <TotalText>总计1条</TotalText>
              <Pager>
                <PageBox>
                  <ChevronLeft size={14} strokeWidth={1.2} />
                </PageBox>
                <PageBox $active>1</PageBox>
                <PageBox>
                  <ChevronRight size={14} strokeWidth={1.2} />
                </PageBox>
                <PageSize>
                  10 条/页
                  <ChevronDown size={13} strokeWidth={1} />
                </PageSize>
              </Pager>
            </Footer>
          </Detail>
        </Body>
      </Content>
    </Main>

    <FloatChat>
      <ChatBubble />
    </FloatChat>
    <FloatPhone>
      <SmilePhone />
    </FloatPhone>
  </Shell>
);

export default App;
